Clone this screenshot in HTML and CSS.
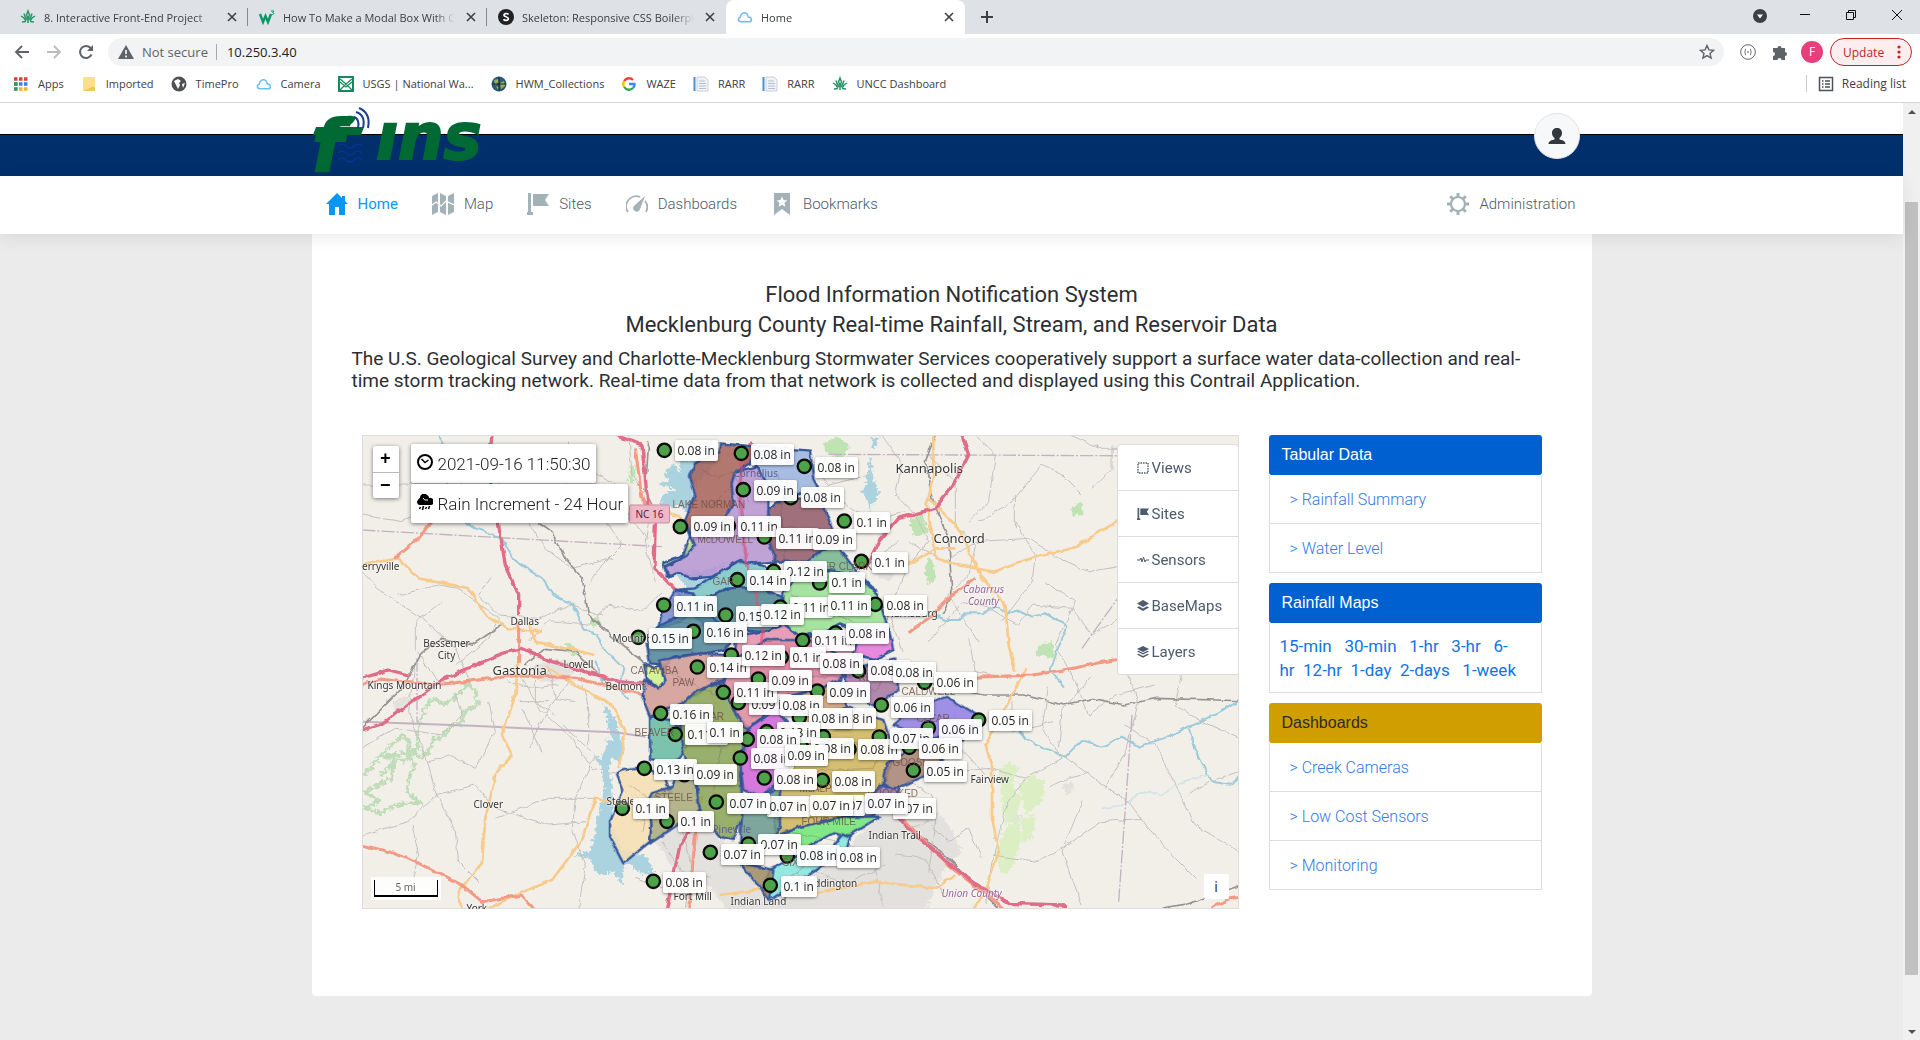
FILE: index.html
```html
<!DOCTYPE html>
<html lang="en">
<head>
<meta charset="utf-8">
<title>Home</title>
<link rel="stylesheet" href="styles.css">
</head>
<body>
<svg class="defs" aria-hidden="true">
  <symbol id="i-close" viewBox="0 0 16 16"><path d="M4 4l8 8M12 4l-8 8" stroke="currentColor" stroke-width="1.6" fill="none"/></symbol>
  <symbol id="i-cloud" viewBox="0 0 16 16"><path d="M4 12.8c-3.400-.2-3.400-4.300-.6-4.600 0-3.200 3-5.200 5.400-4.200 2 .7 2.300 2.600 2.600 4 4 .3 3.800 4.600.8 4.800z" fill="none" stroke="#6dbff2" stroke-width="1.500"/></symbol>
  <symbol id="i-leaf" viewBox="0 0 16 16"><g fill="none" stroke="#2b9468" stroke-width="1.500"><path d="M8 2l-1.500 4L8 9l1.500-3zM8 9v5M4 4.500l1 3 2 3M12 4.500l-1 3-2 3M1 7l3 2 2 3M15 7l-3 2-2 3M2 13l4-.5M14 13l-4-.5"/></g></symbol>
  <symbol id="i-doc" viewBox="0 0 16 16"><path d="M4 1h8l3 3v11H4z" fill="#eff3f7" stroke="#c8d1da"/><path d="M6 5h6M6 7.500h7M6 10h7M6 12.500h7" stroke="#b4c1ce"/><path d="M1.500 1v14" stroke="#4a8fd0" stroke-width="2"/></symbol>
  <symbol id="i-flag" viewBox="0 0 22 22"><path d="M1 0h3v19h2v3H0v-3h1zM6 1h16l-4 6 4 6H6z" fill="currentColor"/></symbol>
  <symbol id="i-layers" viewBox="0 0 12 12"><path d="M6 0l6 3-6 3-6-3zM0 5.500l1.500-.8L6 7l4.500-2.300 1.500.8-6 3zM0 8.500l1.500-.8L6 10l4.500-2.300 1.500.8-6 3.200z" fill="currentColor"/></symbol>
</svg>

<header class="browser">
  <div class="tabs">
    <div class="tab"><svg class="ic"><use href="#i-leaf"/></svg><span>8. Interactive Front-End Project</span><button aria-label="Close tab"><svg class="ic"><use href="#i-close"/></svg></button></div>
    <div class="tab"><svg class="ic" viewBox="0 0 16 16"><path d="M1 5l3 8 2.500-6L9 13l3-8" fill="none" stroke="#059862" stroke-width="2.400"/><path d="M12 2h3l-1.500 1.500c2 0 2 2.500-1 2" fill="none" stroke="#059862"/></svg><span>How To Make a Modal Box With CSS</span><button aria-label="Close tab"><svg class="ic"><use href="#i-close"/></svg></button></div>
    <div class="tab"><svg class="ic" viewBox="0 0 16 16"><circle cx="8" cy="8" r="8" fill="#222"/><path d="M10.500 5.500C9.500 4 5.700 4.200 6 6.300c.3 1.700 4.200 1.200 4.300 3.300.1 2.200-3.800 2.200-4.800.6" fill="none" stroke="#fff" stroke-width="1.700"/></svg><span>Skeleton: Responsive CSS Boilerplate</span><button aria-label="Close tab"><svg class="ic"><use href="#i-close"/></svg></button></div>
    <div class="tab active"><svg class="ic"><use href="#i-cloud"/></svg><span>Home</span><button aria-label="Close tab"><svg class="ic"><use href="#i-close"/></svg></button></div>
    <button class="newtab" aria-label="New tab"><svg class="ic" viewBox="0 0 16 16"><path d="M8 2v12M2 8h12" stroke="#3c4043" stroke-width="2"/></svg></button>
    <div class="winctl">
      <button aria-label="Search tabs"><svg class="ic" viewBox="0 0 16 16"><circle cx="9" cy="10" r="7" fill="#3c4043" transform="translate(0 -1)"/><path d="M6 7.500h6L9 11.500z" fill="#fff"/></svg></button>
      <button aria-label="Minimize"><svg class="ic" viewBox="0 0 16 16"><path d="M3 7.500h10" stroke="#111"/></svg></button>
      <button aria-label="Restore"><svg class="ic" viewBox="0 0 16 16"><path d="M3.500 5.500h7v7h-7zM5.500 5V3.500h7v7H11" fill="none" stroke="#111"/></svg></button>
      <button aria-label="Close window"><svg class="ic" viewBox="0 0 16 16"><path d="M3 3l10 10M13 3L3 13" stroke="#111"/></svg></button>
    </div>
  </div>
  <div class="toolbar">
    <button aria-label="Back"><svg class="ic" viewBox="0 0 16 16"><path d="M15 8H2M8 2L2 8l6 6" fill="none" stroke="#5f6368" stroke-width="1.800"/></svg></button>
    <button aria-label="Forward"><svg class="ic" viewBox="0 0 16 16"><path d="M1 8h13M8 2l6 6-6 6" fill="none" stroke="#babcbe" stroke-width="1.800"/></svg></button>
    <button aria-label="Reload"><svg class="ic" viewBox="0 0 16 16"><path d="M13.500 10.500A6 6 0 1 1 12.500 4L14 6" fill="none" stroke="#5f6368" stroke-width="2"/><path d="M15 1v6H9z" fill="#5f6368"/></svg></button>
    <div class="omnibox">
      <svg class="ic" viewBox="0 0 16 16"><path d="M8 1l8 14H0z" fill="#5f6368"/><path d="M8 6v4M8 11.500v2" stroke="#fff" stroke-width="1.600"/></svg>
      <span class="insecure">Not secure</span>
      <input aria-label="Address" value="10.250.3.40">
      <svg class="ic" viewBox="0 0 16 16"><path d="M8 1.500l1.900 4.400 4.700.4-3.600 3.100 1.100 4.700L8 11.600l-4.100 2.500L5 9.400 1.400 6.300l4.700-.4z" fill="none" stroke="#5f6368" stroke-width="1.400"/></svg>
    </div>
    <div class="ext">
      <svg class="ic" viewBox="0 0 16 16"><circle cx="8" cy="8" r="7.300" fill="none" stroke="#5f6368"/><path d="M6 5C4.500 5 6 7.500 4.500 8 6 8.500 4.500 11 6 11M10 5c1.500 0 0 2.500 1.500 3-1.500.5 0 3-1.500 3M7 8h2" fill="none" stroke="#5f6368"/></svg>
      <svg class="ic" viewBox="0 0 16 16"><path d="M1 4h4.500a2 2 0 1 1 4 0H13v4a2 2 0 1 1 0 4v4H9.500a2 2 0 1 0-4 0H1v-4a2 2 0 1 0 0-4z" fill="#5f6368"/></svg>
      <span class="profile">F</span>
      <button class="update">Update<svg viewBox="0 0 4 16"><g fill="#c5221f"><circle cx="2" cy="3" r="1.600"/><circle cx="2" cy="8" r="1.600"/><circle cx="2" cy="13" r="1.600"/></g></svg></button>
    </div>
  </div>
  <nav class="bookmarks" aria-label="Bookmarks">
    <a href="#"><svg class="ic" viewBox="0 0 16 16"><g stroke-width="3.500" stroke-dasharray="3.500 1.500"><path d="M1 3h14" stroke="#d8433a"/><path d="M1 8h14" stroke="#3f7de0"/><path d="M1 8h4" stroke="#2f9e52"/><path d="M1 13h14" stroke="#f0b429"/><path d="M1 13h4" stroke="#2f9e52"/></g></svg>Apps</a>
    <a href="#"><svg class="ic" viewBox="0 0 16 16"><path d="M2 1h12v14H2z" fill="#fbe08a"/><path d="M11 11h3v4H2" fill="#eec65a"/></svg>Imported</a>
    <a href="#"><svg class="ic" viewBox="0 0 16 16"><circle cx="8" cy="8" r="7.500" fill="#4d5156"/><path d="M3 5l4-2 3 2-2 2 1 2-2 4-2-4zM11 8l3-1-2 5z" fill="#fff"/></svg>TimePro</a>
    <a href="#"><svg class="ic"><use href="#i-cloud"/></svg>Camera</a>
    <a href="#"><svg class="ic" viewBox="0 0 16 16"><path d="M1 1h14v14H1z" fill="#fff" stroke="#138a5b" stroke-width="2"/><path d="M2 3l6 5 6-5M2 6l6 5 6-5M2 14l6-6 6 6" fill="none" stroke="#138a5b" stroke-width="1.200"/></svg>USGS | National Wa...</a>
    <a href="#"><svg class="ic" viewBox="0 0 16 16"><circle cx="8" cy="8" r="7.500" fill="#2b5a80"/><path d="M3 4l4-1 1 3-4 3zM9 7l4-2 1 5-4 3zM5 10l3 1-1 3z" fill="#9bb04a"/><path d="M1 8h14M8 1v14" stroke="#222"/></svg>HWM_Collections</a>
    <a href="#"><svg class="ic" viewBox="0 0 16 16"><g fill="none" stroke-width="2.400"><path d="M3.200 5A5.500 5.500 0 0 1 12 4" stroke="#ea4335"/><path d="M3.200 11a5.500 5.500 0 0 1 0-6" stroke="#fbbc05"/><path d="M12 12a5.500 5.500 0 0 1-8.800-1" stroke="#34a853"/><path d="M8 8h5.500a5.500 5.500 0 0 1-1.500 4" stroke="#4285f4"/></g></svg>WAZE</a>
    <a href="#"><svg class="ic"><use href="#i-doc"/></svg>RARR</a>
    <a href="#"><svg class="ic"><use href="#i-doc"/></svg>RARR</a>
    <a href="#"><svg class="ic"><use href="#i-leaf"/></svg>UNCC Dashboard</a>
    <a href="#" class="reading"><svg class="ic" viewBox="0 0 16 16"><path d="M1.500 1.500h13v13h-13zM4 5h1.500M7 5h5M4 8h1.500M7 8h5M4 11h1.500M7 11h5" fill="none" stroke="#4d5156" stroke-width="1.500"/></svg>Reading list</a>
  </nav>
</header>

<div class="viewport">
  <div class="site">
    <div class="banner">
      <div class="wrap">
        <a class="logo" href="#" aria-label="fins"><svg viewBox="0 0 180 73" aria-hidden="true">
          <text class="logo-f" x="0" y="68">f</text><text class="logo-ins" x="64" y="56">ıns</text>
          <path d="M1 32l3-8h48l-3 8zM26 20c2-6 8-9 18-6-2 6-5 7-8 9-2-3-5-2-8-1z" fill="#006934"/>
          <g fill="none" stroke="#1c3f94" stroke-width="2"><path d="M42 14q6 2 4 11M44 9q10 3 7 16M47 5q12 5 9 20"/></g>
          <path d="M26 43q4-4 8 0t8 0 8 0M26 50q4-4 8 0t8 0 8 0M26 57q4-4 8 0t8 0 8 0" fill="none" stroke="#0a3190" stroke-width="1.500"/>
        </svg></a>
        <button class="user" aria-label="Account"><svg viewBox="0 0 18 18"><path d="M9 1c3 0 5 2 5 5 0 2-1 4-2.500 5v1.500c2.500.5 6 1.500 6 4.500H.5c0-3 3.500-4 6-4.500V11C5 10 4 8 4 6c0-3 2-5 5-5z" fill="#33383f"/></svg></button>
      </div>
    </div>
    <nav class="mainnav" aria-label="Main">
      <div class="wrap">
        <a href="#" class="on"><svg viewBox="0 0 22 22"><path d="M11 0L0 11h3v11h6v-8h4v8h6V11h3l-3-3V3h-3v2z" fill="currentColor"/></svg>Home</a>
        <a href="#"><svg viewBox="0 0 22 22"><path d="M0 3l6-3v19l-6 3zM8 0l6 3v19l-6-3zM16 3l6-3v19l-6 3z" fill="currentColor"/><path d="M0 12l4-3 5 4 5-5 8 4" fill="none" stroke="#fff" stroke-width="1.200"/></svg>Map</a>
        <a href="#"><svg viewBox="0 0 22 22"><use href="#i-flag"/></svg>Sites</a>
        <a href="#"><svg viewBox="0 0 22 22"><path d="M2 19a10 10 0 0 1 12-15M19 8a10 10 0 0 1 1 11" fill="none" stroke="currentColor" stroke-width="1.800"/><path d="M19 3l-5 13a3.500 3.500 0 1 1-5-4z" fill="currentColor"/></svg>Dashboards</a>
        <a href="#"><svg viewBox="0 0 22 22"><path d="M3 0h16v22l-8-6-8 6z" fill="currentColor"/><path d="M11 3.500l1.600 3.500 3.700.4-2.800 2.500.8 3.800-3.300-2-3.300 2 .8-3.800L5.700 7.400 9.400 7z" fill="#fff"/></svg>Bookmarks</a>
        <a href="#" class="admin"><svg viewBox="0 0 22 22"><circle cx="11" cy="11" r="7" fill="none" stroke="currentColor" stroke-width="2.200"/><path d="M11 0v4M11 18v4M0 11h4M18 11h4M3.200 3.200L6 6M16 16l2.800 2.800M3.200 18.800L6 16M16 6l2.800-2.800" stroke="currentColor" stroke-width="3"/></svg>Administration</a>
      </div>
    </nav>
    <main class="card">
      <h1>Flood Information Notification System<br>Mecklenburg County Real-time Rainfall, Stream, and Reservoir Data</h1>
      <p class="intro">The U.S. Geological Survey and Charlotte-Mecklenburg Stormwater Services cooperatively support a surface water data-collection and real-time storm tracking network. Real-time data from that network is collected and displayed using this Contrail Application.</p>
      <div class="cols">
        <section class="map" aria-label="Rainfall map">
          <svg class="base" viewBox="0 0 2631 1422" preserveAspectRatio="xMinYMin slice" aria-hidden="true">
            <defs>
              <filter id="shore" x="-5%" y="-5%" width="110%" height="110%"><feTurbulence type="fractalNoise" baseFrequency=".09" numOctaves="2" seed="4"/><feDisplacementMap in="SourceGraphic" scale="26" xChannelSelector="R" yChannelSelector="G"/></filter>
              <filter id="bend" x="-5%" y="-5%" width="110%" height="110%"><feTurbulence type="fractalNoise" baseFrequency=".035" numOctaves="2" seed="9"/><feDisplacementMap in="SourceGraphic" scale="14" xChannelSelector="R" yChannelSelector="G"/></filter>
            </defs>
            <path d="M0 0h2631v1422H0z" fill="#f2efe9"/>
            <g fill="#e3e1dd" filter="url(#shore)">
              <path d="M880 1220l130-90 220 270 140-90 210-190 90 60 80 110-60 140H1100l-60-80-90-30z"/>
              <path d="M1630 1150l70-40 60 60 40 80-60 60-80-30zM90 800l50-20 10 20-45 30zM520 690l60-20 70 20-30 40-80 10zM1560 380l50 20-30 40-40-20zM1950 1130l30 10-10 30-30-10zM2100 1050l30-10 10 20-30 20z"/>
            </g>
            <g fill="#aad3df" filter="url(#shore)">
              <path d="M905 120l30-35 22 30-6-70 25 35 30-60 60 20-15 60-60 60 10 50-40-20-30 15 10-40-50-20 30-10z"/>
              <path d="M900 175l50-10 45 35-20 30-30-20-50 20zM935 400l50 12 60-10 50-25-60 70-60 20zM715 1120l12-60-8-60-20-40 20 10 20-50 20 20-20 70 16 70-8 90 42 80 60 10 30 50-30 10-60-40-10 70-24-40-50 10-20-50-60-10 60-10z"/>
              <path d="M722 810l20 10 24 50 20 80-10 30-24-10-20-60 20 10-10-40zM1500 170l15-30 10-80 10 80 18 30-20 40-10 20-10-40zM1530 10l20-8-6 30-16 10z"/>
            </g>
            <g fill="none" stroke="#9ccbdc" stroke-width="6" stroke-linejoin="round" filter="url(#bend)">
              <path d="M230 0l20 30-10 60 40 150 60 40 80 30 30 60 90 60 34 50 60 30 30 70 40 20 20 40 60 60-14 60 30 30M1720 540l30 15 40 0 20-20 50 0 40-20 40 20 30-10 40 20 40-10 66 40-30 70-20 60 40 50M2480 880l30 90 40 70 60 10 30-40M1950 860l40 50 60 30 60 25 50-50 60 20 60-30 50 30 90-30 60-30 90-40 80-50M720 740l-20-60"/>
              <path d="M2220 1120l60-10 60-40 60 10 60-40 80-20" stroke="#cfe4e8" stroke-width="5"/>
            </g>
            <g fill="#dcefc4" filter="url(#shore)">
              <path d="M1910 1010l30-30 30 20-20 50 30 40-20 60-30 20-10-60zM1970 1050l40-30 40 20-10 60-50 40zM1930 1180l40-30 10 60-30 90-30 20-20-60zM1980 1150l40-10-10 70-30 20z"/>
            </g>
            <g fill="#bfe3b2" filter="url(#shore)">
              <path d="M2030 630l40-10 10 50-60-10zM1640 250l40-10 20 50-40 20zM1700 370l14 10 8 50-20 20-14-40zM1385 25l45-20 36 30-30 36-50-20zM2125 217l32-12 10 30-36 10z"/>
              <path d="M800 100l22-10-6 60-16-10zM690 545l30 10-14 20-26-10zM610 620l20 10 20 30-26 0z"/>
            </g>
            <g transform="translate(-6 675)" fill="none" stroke="#a5d3a0" stroke-width="10" stroke-opacity=".65" stroke-linejoin="round" filter="url(#shore)">
              <path d="M8 350l60-70 60-55 20 20-5 30 30-10 0-60 20-60 30-30 30 20 50-40 20-25 20 15 10 50-40 20-10 40-20-10-40 50-20 0-20 40-20 20-20-20-30 30-20-10-50 50M60 290l80-10 25 30-20 50 0 40 40 30-50 0-40 10-30 20-50-15 40-20-40-30 80-40 5-60z"/>
            </g>
            <!-- minor roads -->
            <g fill="none" stroke="#c3c1be" stroke-width="3" stroke-linejoin="round" filter="url(#bend)">
              <path d="M0 240l120 20 140-60 60-90 120-60M0 410l60 60 120 80 100 90 40 90M110 480l120-30 60 10 120 90-30 60-100 80M240 500l-80 60 0 80 60 90 60 20M450 180l60 100 40 60 80 60 120-30M390 420l-40 60 60 60 120 10 90-40 100 30M500 620l60-60 120 10 60-60 100 20 60-60M620 20l-20 100 40 90 80 30 60 90-60 60-40 60M420 120l-20 60 60 60M0 150l140 0 80-110M680 100l100 60 20 90 60 60M800 0l10 120 60 90-20 130 30 100"/>
              <path d="M380 800l20 90-60 110-80-40-60 20M480 730l60 100 90 80 60 90 100 20M620 740l-60 80-60 120M480 820l60 130M160 680l-20 150 60 160 20 80 60 120 10 90 60 60M0 1200l140-40 80-80 120-30 60 70 160 50 110-10M400 1150l160-60 140 0M650 700l30 120 0 110M150 1170l20 90-20 80M600 870l100 90-60 130-10 100 40 100-20 130M0 940l100-60 140 20 60-60-20-60"/>
              <path d="M1560 0l60 90-20 90 60 60 40 80-60 70-60 140 40 120M1700 60l80 80 0 130 60 60-20 90-60 60 90 140M1840 0l60 60-20 140-60 60M1640 320l110 60 90-60 160-10 90 60 90 40 120-20M1850 260l100-60 90-110 60 30 60 60M1960 260l60 100-10 80-90 120M1960 180l0 100M2120 0l100 40 160 0M1700 620l100-120 60 10 110 60 40-60 120 10 60 80 80-50M2190 160l60-60 0-70M1820 610l20 100 110 20M2050 440l90 60-60 130 60 110 40 100 80-60 120-30"/>
              <path d="M1700 950l90 60 90-10 110 30 110-60-60-90 20-130M2100 960l110 80 90 60 60 80 80 90 60 60M1990 1030l-60 90-40 160-20 130M2060 1060l60-30 60-15M2160 1100l-60 150 60 160M1890 1260l140 20 100-60 90-60 120-10M2290 870l90 60 60 120 60 120 130 80M2480 1080l60-40 90-30M2270 660l60 140-40 150-60 110M1780 830l0 90 90 100M2190 720l-90 110-10 110M2070 860l-120 30 0-90M2420 650l40 60-20 100 60 40 130 60M1640 1180l60-20 60 60 60-40 40 90M1650 1040l60 40 10 100-20 130M1600 1260l90 10 60 120"/>
              <path d="M520 690l0 110 60 40M560 690l20 100 60 10M440 740l60 20 90-10M470 800l90 0M1340 60l60 90 120-30M1440 200l90 60 100-30M1500 400l110-80M1420 1180l120 120 20 110M1340 1300l110 50 120-60M900 1220l60 90 90 20M820 1330l110 40 100-10M960 1180l30 110-20 130"/>
            </g>
            <g fill="none" stroke="#c4b2c2" stroke-width="4">
              <path d="M0 860l330 12 420 20M750 890l100 15" stroke-width="6"/>
              <path d="M0 285l900 50M1400 58l1200 6M2160 640l400-560M165 670l0 190M2310 840l-40 560" stroke-dasharray="40 6 6 6"/>
            </g>
            <!-- railways -->
            <g fill="none" stroke="#969492" stroke-width="5" filter="url(#bend)">
              <path d="M500 240l70 50 40 80 50 60 20 110 100 90 80 60M0 880l120-120 60-110 60-40 90 20 90-60M490 690l60-50 90 10 60 60 50 50M1720 0l-30 80 20 110 50 120 10 170-30 60M1764 760l100 20 120 0 120 30 90-20 90 20 100-20 350 10M860 20l-10 150 30 60M1590 1130l180 150 140 140M2400 1422l60-10 90-30 81-30"/>
            </g>
            <!-- secondary roads -->
            <g fill="none" stroke="#f8cb8c" stroke-width="8" stroke-linejoin="round" filter="url(#bend)">
              <path d="M0 390l110-20 60 60 150 30 60 90 60 30 100 10M470 560l0 100-10 120-40 120 30 60-50 60-30 130-10 130-70 90 20 120M800 220l-60-20-80-10M700 660l-180-40-20-60M550 690l90 60 110 60 40 80-20 110M780 1110l-80-20M700 1085l-40 130-90 120-100 40-80 40-40 30M1714 0l0 120-20 90 30 160 60 20 110 20 60-20 80-30 100-20 130-80 60-60 80-10M1700 190l90 90 40 90 30 60 70 80 10 120 20 80M1614 400l110-60 60 0M840 200l80 30 60 30M1990 700l-60 120-60 110 20 60 0 160 20 100-40 120-90 130M1070 1380l160-20 110 20 200-40 180 20 60-40"/>
              <path d="M1014 700l100 220 40 220M1200 640l60 240-20 240M1290 520l100 140 200 110" stroke-width="6"/>
            </g>
            <!-- primary roads -->
            <g fill="none" stroke="#f49a84" stroke-width="9" stroke-linejoin="round" filter="url(#bend)">
              <path d="M0 750l60-20 160 20 260-30 160 10 210 50M100 370l70-60 60-80M470 560l0 120M0 1230l80 20 80 30 140 70 60 50 120-20 60 70M980 1422l20-220 20-120M1614 735l400-15 120-20 120-25 60-5 120-30 50-5M1590 1120l180 180 160 122M2540 1422l60-30 31-5M1840 430l-80 60-60 60-60 40M820 40l20 150 20 40"/>
            </g>
            <!-- motorways -->
            <g fill="none" stroke="#e06c88" stroke-width="10" stroke-linejoin="round" filter="url(#bend)">
              <path d="M390 0l-10 90 30 180 20 120 40 90 0 60M0 730l80-25 60 15M0 885l60-20 180-130 180-80 60-15 90 40 200 60 120 10M760 0l80 30 20 200 20 30-4 140 80 80M1170 20l-40 130 20 230M1014 1140l-60 90-40 190M1800 0l20 60-40 80-60 80-110 30-60 70-40 80M1590 1130l80 80 160 130 110 65 160 5 20 20"/>
            </g>
            <!-- watershed basins -->
            <g stroke="#34549c" stroke-width="7" stroke-linejoin="round" fill-opacity=".86" filter="url(#bend)">
              <g transform="translate(834 -15)">
                <path d="M240 40l80 7 25 3-15 50-45 25-10 35 5 60-35 60-95 30-15-40 30-75-15-55 15-40 70-33z" fill="#a8625a"/>
                <path d="M345 47l165 15 10 88 35 65-75-25-40-10-55-5-25-45-15-30z" fill="#9bb3e0"/>
                <path d="M150 310l95-30 35-60-5-60 10-35 65-15 35 60v130l20 95-65 5-50-5-70 45-60 5-50-15-30 10-10-40 65-30 25-30z" fill="#b795d3"/>
                <path d="M135 280l30 65-30 35-60 30 10 30-15-40 60-25 20-55z" fill="#cdea90"/>
                <path d="M385 240l55-40 105 15 30 75 15 45-50 35-40 25h-95l-20-65z" fill="#935b6a"/>
                <path d="M505 395l25-25 60-25 60 80 55 55-65-30-80-10z" fill="#74b68e"/>
                <path d="M105 480l60-5 135-85 80 20 30 30-60 30-90 5-120 55z" fill="#7ec6c8"/>
                <path d="M130 530l140-55 80-5 75 30 10 80-50 20-100 5-90-20z" fill="#4d8793"/>
                <path d="M430 490l75-95 55 25 90 10 60 60 30 90-90 20-50-20-40 20-80 20-50-40z" fill="#9ae094"/>
                <path d="M105 480l55 10 20 40-60 45-65 20 10-50z" fill="#7c8cd4"/>
                <path d="M20 640l35-50 75-40 70-5 60 60 25 15-35 40-60 10-90 10-20 25-50-5z" fill="#50869a"/>
                <path d="M285 620l100-20 45-20 50 40 110-10 60 40-10 90H280z" fill="#e491ae"/>
                <path d="M650 640l95-50 15 70-60 30-60-15z" fill="#e678dc"/>
              </g>
              <g transform="translate(714 615)">
                <path d="M132 70l30 15 20-10 15 45-22 27-35-32z" fill="#d0f48c"/>
                <path d="M180 60l60-10 60-10 80 5 20 65-60 20-95 60-95 40-20-50 5-60 40 25 22-25z" fill="#d39c96"/>
                <path d="M150 230l60 10 60 40-20 60-30 30-70-10z" fill="#69bca4"/>
                <path d="M250 190l40-40 85-25 25 85 50 60-30 130 10 120-30 80-40-10-60-80-10-80-40-90-10-60z" fill="#8aa457"/>
                <path d="M400 60l100-60h140l100 60-20 70-160 40-60 50-60 50-40-60-30-80z" fill="#de8aa2"/>
                <path d="M440 270l90-60 70 80-80 150-40 30-50-20-10-80z" fill="#d266da"/>
                <path d="M560 180l160-60 20 80-100 60-50-10z" fill="#d6a27a"/>
                <path d="M735 90l150-35 10 95-65 50-90-40z" fill="#a678a4"/>
                <path d="M640 260l100-60 110 40 20 60 10 50-30 90-110 90-140 30-80 30 20-140 50-120z" fill="#cfb65e"/>
                <path d="M430 470l50 0 60-30 0 120-40 60-50 20-30-30z" fill="#6a9a90"/>
                <path d="M880 255l70-55 90-30 110 65-50 55-100 10-60-20z" fill="#9380e4"/>
                <path d="M860 370l90-60 60-20 80 10-120 110-90 40-30-20z" fill="#a98474"/>
                <path d="M840 440l60 5-20 45-70 40-60 0z" fill="#9472b0"/>
                <path d="M50 400l20-10 65-5 60 30 15 40-60 20 5 60-5 70-80 65-40-75v-50l40-95z" fill="#f7dfb2"/>
                <path d="M155 460l60-20 20-50 50 30 15 90-150 100 5-60-15-60z" fill="#abab7e"/>
                <path d="M510 600l90-40 140-30h100l-100 60-40-10-80 40-50-5z" fill="#70e674"/>
                <path d="M510 690l90-50 100-20 30-40 20 10-10 40-90 60-140 90-20-40z" fill="#86e6de"/>
                <path d="M420 670l60 10 40 10-10 90z" fill="#a08c62"/>
              </g>
            </g>
            <g fill="none" stroke="#6b4a50" stroke-opacity=".28" stroke-width="3" filter="url(#bend)">
              <path d="M1010 100l60 30 40-20 50 90M1100 160l-60 60M1250 120l20 300M1150 300l90-30 130 20M940 560l140 20 120-40M1290 480l200 90M900 700l180 90 160-60M1000 850l80 90-30 150M1330 900l190 30 60-60M1310 1010l220-10 40-60M800 1050l60 40-20 100M1240 760l60 60 100-40M1440 690l100 80 40-60M1660 830l140 30M1240 1180l180 40M1280 1330l80-60"/>
            </g>
            <path d="M1140 60l-6 100 20 220 50 180-10 110" fill="none" stroke="#d8527a" stroke-opacity=".6" stroke-width="9" filter="url(#bend)"/>
            <!-- rain gauges -->
            <g fill="#4ea24a" stroke="#0b0b0b" stroke-width="7">
              <g transform="translate(834 -15)"><circle cx="73" cy="61" r="20"/><circle cx="304" cy="70" r="20"/><circle cx="493" cy="109" r="20"/><circle cx="310" cy="179" r="20"/><circle cx="452" cy="203" r="20"/><circle cx="121" cy="290" r="20"/><circle cx="265" cy="288" r="20"/><circle cx="373" cy="321" r="20"/><circle cx="613" cy="273" r="20"/><circle cx="664" cy="394" r="20"/><circle cx="401" cy="424" r="20"/><circle cx="292" cy="449" r="20"/><circle cx="539" cy="459" r="20"/><circle cx="71" cy="525" r="20"/><circle cx="257" cy="555" r="20"/><circle cx="421" cy="531" r="20"/><circle cx="706" cy="523" r="20"/><circle cx="160" cy="604" r="20"/><circle cx="587" cy="609" r="20"/><circle cx="488" cy="631" r="20"/><circle cx="-5" cy="622" r="20"/></g>
              <g transform="translate(714 615)"><circle cx="394" cy="45" r="20"/><circle cx="292" cy="81" r="20"/><circle cx="544" cy="52" r="20"/><circle cx="475" cy="117" r="20"/><circle cx="370" cy="157" r="20"/><circle cx="415" cy="188" r="20"/><circle cx="652" cy="153" r="20"/><circle cx="776" cy="93" r="20"/><circle cx="974" cy="127" r="20"/><circle cx="844" cy="195" r="20"/><circle cx="182" cy="220" r="20"/><circle cx="226" cy="283" r="20"/><circle cx="598" cy="232" r="20"/><circle cx="442" cy="298" r="20"/><circle cx="500" cy="275" r="20"/><circle cx="670" cy="290" r="20"/><circle cx="838" cy="291" r="20"/><circle cx="985" cy="264" r="20"/><circle cx="1136" cy="240" r="20"/><circle cx="421" cy="354" r="20"/><circle cx="605" cy="322" r="20"/><circle cx="493" cy="414" r="20"/><circle cx="667" cy="421" r="20"/><circle cx="928" cy="322" r="20"/><circle cx="940" cy="391" r="20"/><circle cx="747" cy="328" r="20"/><circle cx="133" cy="385" r="20"/><circle cx="253" cy="404" r="20"/><circle cx="67" cy="505" r="20"/><circle cx="201" cy="544" r="20"/><circle cx="349" cy="486" r="20"/><circle cx="331" cy="637" r="20"/><circle cx="445" cy="612" r="20"/><circle cx="562" cy="648" r="20"/><circle cx="511" cy="736" r="20"/><circle cx="160" cy="724" r="20"/></g>
            </g>
          </svg>

          <div class="places">
            <span style="left:-12px;top:131px">Cherryville</span>
            <span class="two" style="left:85px;top:214px">Bessemer<br>City</span>
            <span style="left:149px;top:186px">Dallas</span>
            <span class="big" style="left:131px;top:235px">Gastonia</span>
            <span style="left:202px;top:229px">Lowell</span>
            <span style="left:251px;top:203px">Mount Holly</span>
            <span style="left:6px;top:250px">Kings Mountain</span>
            <span style="left:244px;top:251px">Belmont</span>
            <span style="left:112px;top:369px">Clover</span>
            <span style="left:245px;top:366px">Steele</span>
            <span style="left:105px;top:473px">York</span>
            <span class="big" style="left:534px;top:33px">Kannapolis</span>
            <span class="big" style="left:572px;top:103px">Concord</span>
            <span style="left:525px;top:178px">Harrisburg</span>
            <span style="left:507px;top:400px">Indian Trail</span>
            <span style="left:438px;top:448px">Weddington</span>
            <span style="left:312px;top:461px">Fort Mill</span>
            <span style="left:369px;top:466px">Indian Land</span>
            <span style="left:609px;top:344px">Fairview</span>
            <span class="faded" style="left:372px;top:38px">Cornelius</span>
            <span class="faded" style="left:351px;top:394px">Pineville</span>
            <span class="county two" style="left:622px;top:160px">Cabarrus<br>County</span>
            <span class="county" style="left:580px;top:458px">Union County</span>
            <span class="basin" style="left:311px;top:70px">LAKE NORMAN</span>
            <span class="basin" style="left:336px;top:105px">McDOWELL</span>
            <span class="basin" style="left:351px;top:147px">GAR</span>
            <span class="basin" style="left:440px;top:132px">UPPER CLARKE</span>
            <span class="basin" style="left:269px;top:236px">CATAWBA</span>
            <span class="basin" style="left:311px;top:248px">PAW</span>
            <span class="basin" style="left:273px;top:298px">BEAVER</span>
            <span class="basin" style="left:327px;top:282px">SUGAR</span>
            <span class="basin" style="left:293px;top:363px">STEELE</span>
            <span class="basin" style="left:438px;top:354px">McALPINE</span>
            <span class="basin" style="left:440px;top:387px">FOUR MILE</span>
            <span class="basin" style="left:421px;top:428px">SIX MILE</span>
            <span class="basin" style="left:540px;top:257px">CALDWELL</span>
            <span class="basin" style="left:555px;top:284px">CLEAR</span>
            <span class="basin" style="left:497px;top:243px">REEDY</span>
            <span class="basin" style="left:531px;top:328px">GOOSE</span>
            <span class="basin" style="left:506px;top:359px">CROOKED</span>
            <span class="shield" style="left:267px;top:79px">NC 16</span>
          </div>

          <div class="tips">
            <span style="left:313px;top:5px">0.08 in</span><span style="left:389px;top:9px">0.08 in</span><span style="left:453px;top:22px">0.08 in</span>
            <span style="left:439px;top:52px">0.08 in</span><span style="left:392px;top:45px">0.09 in</span><span style="left:329px;top:81px">0.09 in</span>
            <span style="left:376px;top:81px">0.11 in</span><span style="left:492px;top:77px">0.1 in</span><span style="left:414px;top:93px">0.11 in</span>
            <span style="left:451px;top:94px">0.09 in</span><span style="left:510px;top:117px">0.1 in</span><span style="left:422px;top:126px">0.12 in</span>
            <span style="left:385px;top:135px">0.14 in</span><span style="left:467px;top:137px">0.1 in</span><span style="left:312px;top:161px">0.11 in</span>
            <span style="left:428px;top:162px">0.11 in</span><span style="left:466px;top:160px">0.11 in</span><span style="left:522px;top:160px">0.08 in</span>
            <span style="left:374px;top:171px">0.15 in</span><span style="left:399px;top:169px">0.12 in</span><span style="left:342px;top:187px">0.16 in</span>
            <span style="left:450px;top:195px">0.11 in</span><span style="left:484px;top:188px">0.08 in</span><span style="left:287px;top:193px">0.15 in</span>
            <span style="left:345px;top:222px">0.14 in</span><span style="left:380px;top:210px">0.12 in</span><span style="left:428px;top:212px">0.1 in</span>
            <span style="left:458px;top:218px">0.08 in</span><span style="left:506px;top:225px">0.08 in</span><span style="left:531px;top:227px">0.08 in</span>
            <span style="left:572px;top:237px">0.06 in</span><span style="left:387px;top:259px">0.09 in</span><span style="left:372px;top:247px">0.11 in</span>
            <span style="left:407px;top:235px">0.09 in</span><span style="left:465px;top:247px">0.09 in</span><span style="left:418px;top:260px">0.08 in</span>
            <span style="left:471px;top:273px">0.08 in</span><span style="left:447px;top:273px">0.08 in</span><span style="left:529px;top:262px">0.06 in</span>
            <span style="left:308px;top:269px">0.16 in</span><span style="left:627px;top:275px">0.05 in</span><span style="left:323px;top:289px">0.11 in</span>
            <span style="left:345px;top:287px">0.1 in</span><span style="left:415px;top:287px">0.13 in</span><span style="left:395px;top:294px">0.08 in</span>
            <span style="left:449px;top:303px">0.08 in</span><span style="left:389px;top:313px">0.08 in</span><span style="left:423px;top:310px">0.09 in</span>
            <span style="left:496px;top:304px">0.08 in</span><span style="left:528px;top:293px">0.07 in</span><span style="left:577px;top:284px">0.06 in</span>
            <span style="left:557px;top:303px">0.06 in</span><span style="left:292px;top:324px">0.13 in</span><span style="left:332px;top:329px">0.09 in</span>
            <span style="left:412px;top:334px">0.08 in</span><span style="left:470px;top:336px">0.08 in</span><span style="left:562px;top:326px">0.05 in</span>
            <span style="left:405px;top:361px">0.07 in</span><span style="left:365px;top:358px">0.07 in</span><span style="left:474px;top:360px">0.07</span>
            <span style="left:448px;top:360px">0.07 in</span><span style="left:531px;top:363px">0.07 in</span><span style="left:503px;top:358px">0.07 in</span>
            <span style="left:271px;top:363px">0.1 in</span><span style="left:316px;top:376px">0.1 in</span><span style="left:396px;top:399px">0.07 in</span>
            <span style="left:359px;top:409px">0.07 in</span><span style="left:435px;top:410px">0.08 in</span><span style="left:475px;top:412px">0.08 in</span>
            <span style="left:419px;top:441px">0.1 in</span><span style="left:301px;top:437px">0.08 in</span>
          </div>

          <div class="controls">
            <div class="zoom"><button aria-label="Zoom in">+</button><button aria-label="Zoom out">−</button></div>
            <div class="info">
              <div><svg viewBox="0 0 16 16"><circle cx="8" cy="8" r="7" fill="none" stroke="#000" stroke-width="2"/><path d="M4.500 5L8 8.500 11.500 6" fill="none" stroke="#000" stroke-width="1.500"/></svg>2021-09-16 11:50:30</div>
              <div><svg viewBox="0 0 16 16"><path d="M2 11a3 3 0 0 1-1-5 3 3 0 0 1 2-2 4 4 0 0 1 7-3 3 3 0 0 1 2 3 3.600 3.600 0 0 1 2 7z"/><path d="M6 4q1 3 5 2" stroke="#fff" fill="none"/><path d="M3.500 13l-1 2M6.500 12l-1 4M9.500 13l-1 2M12.500 12l-1 3" stroke="#000" stroke-width="1.500"/></svg>Rain Increment - 24 Hour</div>
            </div>
            <div class="panel">
              <button><svg viewBox="0 0 12 12"><path d="M1 1h10v10H1z" fill="none" stroke="currentColor" stroke-width="1.400" stroke-dasharray="1.500 1"/></svg>Views</button>
              <button><svg viewBox="0 0 22 22"><use href="#i-flag"/></svg>Sites</button>
              <button><svg viewBox="0 0 12 12"><path d="M0 6h3l1-2 1 4 1.500-5L8 8l1-2h3" fill="none" stroke="currentColor"/></svg>Sensors</button>
              <button><svg viewBox="0 0 12 12"><path d="M6 0l6 3.500L6 7 0 3.500zM0 7.500l2-1.200L6 8.500l4-2.200 2 1.200-6 3.500z" fill="currentColor"/></svg>BaseMaps</button>
              <button><svg viewBox="0 0 12 12"><use href="#i-layers"/></svg>Layers</button>
            </div>
          </div>
          <div class="scale"><span>5 mi</span></div>
          <button class="attrib" aria-label="Attribution">i</button>
        </section>

        <aside class="side">
          <section><h2>Tabular Data</h2>
            <ul><li><a href="#">&gt; Rainfall Summary</a></li><li><a href="#">&gt; Water Level</a></li></ul></section>
          <section><h2>Rainfall Maps</h2>
            <p class="ranges"><a href="#">15-min</a> &nbsp; <a href="#">30-min</a> &nbsp; <a href="#">1-hr</a> &nbsp; <a href="#">3-hr</a> &nbsp; <a href="#">6-hr</a> &nbsp;<a href="#">12-hr</a> &nbsp;<a href="#">1-day</a> &nbsp;<a href="#">2-days</a> &nbsp; <a href="#">1-week</a></p></section>
          <section><h2 class="gold">Dashboards</h2>
            <ul><li><a href="#">&gt; Creek Cameras</a></li><li><a href="#">&gt; Low Cost Sensors</a></li><li><a href="#">&gt; Monitoring</a></li></ul></section>
        </aside>
      </div>
    </main>
  </div>
  <div class="scrollbar" aria-hidden="true"><i class="up"></i><i class="thumb"></i><i class="down"></i></div>
</div>
</body>
</html>
```
FILE: styles.css
```css
* { box-sizing: border-box; }
body {
  margin: 0;
  min-height: 100vh;
  display: flex;
  flex-direction: column;
  background: #ebebeb;
  font-family: Roboto, "Liberation Sans", sans-serif;
  color: #2b2f33;
}
button { border: 0; padding: 0; background: none; font: inherit; color: inherit; }
a { text-decoration: none; color: inherit; }
.defs { position: absolute; width: 0; height: 0; }
.ic { width: 16px; height: 16px; flex: none; display: block; }

/* browser frame */
.browser { background: #fff; border-bottom: 1px solid #d5d7da; font-family: "Open Sans", "Noto Sans", sans-serif; color: #3c4043; }
.tabs { display: flex; align-items: center; height: 34px; background: #dee1e6; padding-left: 9px; }
.tab { flex: 0 1 239px; min-width: 0; height: 34px; display: flex; align-items: center; gap: 8px; padding: 0 8px 0 11px; font-size: 11px; position: relative; }
.tab span { flex: 1; overflow: hidden; white-space: nowrap; mask-image: linear-gradient(90deg, #000 88%, transparent); }
.tab:nth-child(-n+2)::after { content: ""; position: absolute; right: 0; top: 8px; height: 18px; border-right: 1px solid #85888d; }
.tab.active { background: #fff; border-radius: 8px 8px 0 0; }
.newtab { margin-left: 14px; }
.winctl { margin-left: auto; display: flex; gap: 30px; padding: 0 15px 4px 0; }
.toolbar { display: flex; align-items: center; height: 36px; padding: 0 8px 0 14px; gap: 16px; }
.omnibox { flex: 1; height: 28px; border-radius: 14px; background: #f1f3f4; display: flex; align-items: center; padding: 0 9px 0 10px; gap: 8px; margin-left: -2px; font-size: 13px; }
.insecure { color: #5f6368; padding-right: 8px; border-right: 1px solid #a5a8ad; line-height: 16px; }
.omnibox input { flex: 1; border: 0; background: none; font: inherit; color: #202124; padding: 0 2px; outline: 0; }
.ext { display: flex; align-items: center; gap: 16px; }
.profile { width: 22px; height: 22px; border-radius: 50%; background: #e83e7c; color: #fff; font-size: 12px; line-height: 22px; text-align: center; margin: 0 -9px 0 -3px; }
.update { display: flex; align-items: center; justify-content: space-between; width: 82px; height: 28px; padding: 0 10px 0 12px; border: 1px solid #c5221f; border-radius: 14px; background: #fceeee; color: #c5221f; font-size: 12px; }
.update svg { width: 4px; height: 16px; }
.bookmarks { display: flex; align-items: center; height: 32px; padding: 0 14px 5px 13px; gap: 17px; font-size: 11px; }
.bookmarks a { display: flex; align-items: center; gap: 9px; white-space: nowrap; }
.bookmarks .reading { margin-left: auto; padding-left: 11px; border-left: 1px solid #c8cacd; font-size: 12px; gap: 8px; }

/* page area and scroll bar */
.viewport { flex: 1; display: flex; }
.site { flex: 1; min-width: 0; }
.scrollbar { width: 17px; background: #f0f0f0; display: flex; flex-direction: column; align-items: center; }
.scrollbar i { display: block; }
.up, .down { border: 4px solid transparent; }
.up { border-bottom-color: #505050; margin: 3px 0 88px; }
.down { border-top-color: #505050; margin: auto 0 2px; }
.thumb { width: 13px; flex: 0 0 82.5%; background: #c1c1c1; }
.wrap { max-width: 1280px; margin: 0 auto; display: flex; align-items: center; }

/* site header */
.banner { background: linear-gradient(#fff 31px, #000 31px, #000 32px, #002f6c 32px); }
.banner .wrap { height: 73px; }
.logo svg { display: block; width: 180px; height: 73px; overflow: visible; }
.logo text { font-family: "DejaVu Sans", sans-serif; font-weight: 700; font-style: italic; fill: #006934; stroke: #006934; stroke-width: 2px; }
.logo-f { font-size: 72px; }
.logo-ins { font-size: 64px; }
.user { margin: 0 12px 8px auto; width: 46px; height: 46px; border-radius: 50%; background: #f6f8fa; border: 1px solid #dfe3e8; display: grid; place-items: center; }
.user svg { width: 18px; height: 18px; }
.mainnav { position: relative; background: #fff; box-shadow: 0 4px 16px rgba(0, 0, 0, .08); font-size: 15px; font-weight: 300; color: #4d5966; }
.mainnav .wrap { height: 58px; padding: 0 16px 3px 14px; gap: 34px; }
.mainnav a { display: flex; align-items: center; gap: 10px; }
.mainnav svg { width: 22px; height: 22px; color: #a3b1b8; }
.mainnav .on { color: #0a96f5; font-weight: 400; }
.mainnav .on svg { color: #0a96f5; }
.mainnav .admin { margin-left: auto; }

/* content */
.card { max-width: 1280px; margin: 0 auto 43px; background: #fff; border-radius: 0 0 4px 4px; padding: 46px 50px 87px; }
h1 { margin: 0; font-size: 22px; line-height: 30px; font-weight: 400; text-align: center; }
.intro { margin: 8px -10px 43px; font-size: 19px; line-height: 22px; }
.cols { display: flex; align-items: flex-start; gap: 30px; }

/* map */
.map { position: relative; flex: 1; height: 474px; outline: 1px solid #ddd; outline-offset: -1px; overflow: hidden; }
.base { display: block; width: 877px; min-width: 100%; height: 100%; }
.places span, .tips span { position: absolute; white-space: nowrap; }
.places span { transform: translateY(-50%); font: 10px/12px "Noto Sans", sans-serif; color: #333; text-shadow: 0 0 2px #fff, 0 0 2px #fff; }
.places .big { font-size: 13px; line-height: 16px; }
.places .two { transform: translate(-50%, -50%); text-align: center; }
.places .faded { color: #5c6390; text-shadow: none; }
.places .county { font-style: italic; color: #95649a; }
.places .basin { font: 10px/12px "Liberation Sans", sans-serif; color: #6d4f45; text-shadow: none; opacity: .8; }
.places .shield { font-size: 10px; line-height: 17px; padding: 0 6px; background: #edb9c8; border: 1px solid #c98ba0; border-radius: 2px; color: #5d2136; text-shadow: none; }
.tips span { height: 21px; padding: 0 3px; background: rgba(255, 255, 255, .95); border-radius: 2px; box-shadow: 0 1px 3px rgba(0, 0, 0, .45); font: 12px/21px "Open Sans", "Noto Sans", sans-serif; color: #222; }
.controls { position: absolute; inset: 9px 0 auto 11px; display: flex; align-items: flex-start; }
.zoom { display: flex; flex-direction: column; width: 26px; margin: 2px 12px 0 0; border-radius: 2px; background: #fff; box-shadow: 0 1px 4px rgba(0, 0, 0, .5); }
.zoom button { height: 26px; font: bold 18px/26px "Liberation Mono", monospace; color: #000; }
.zoom button + button { border-top: 1px solid #bbb; }
.info { display: flex; flex-direction: column; align-items: flex-start; gap: 1px; font-size: 17px; font-weight: 300; color: #222; }
.info div { display: flex; align-items: center; gap: 5px; height: 39px; padding: 0 5px 0 6px; background: #fff; border-radius: 2px; box-shadow: 0 1px 4px rgba(0, 0, 0, .5); }
.info svg { width: 16px; height: 16px; margin-bottom: 4px; }
.panel { margin-left: auto; width: 122px; background: #fff; border: solid #ddd; border-width: 1px 1px 0; border-radius: 4px; display: flex; flex-direction: column; }
.panel button { display: flex; align-items: center; gap: 3px; height: 46px; padding-left: 19px; font-size: 15px; color: #4c5b6d; border-bottom: 1px solid #ddd; }
.panel svg { width: 12px; height: 12px; }
.scale { position: absolute; left: 9px; bottom: 9px; padding: 3px; background: rgba(255, 255, 255, .85); }
.scale span { display: block; width: 64px; height: 17px; border: solid #000; border-width: 0 1px 2px; font: 10px/15px "Noto Sans", sans-serif; color: #666; text-align: center; }
.attrib { position: absolute; right: 10px; bottom: 10px; width: 25px; height: 25px; background: #fff; border-radius: 2px; font: 14px/25px "Noto Sans", sans-serif; color: #333; }

/* side lists */
.side { flex: 0 0 273px; display: flex; flex-direction: column; gap: 10px; font-size: 16px; }
.side h2 { margin: 0; height: 40px; padding: 0 13px; border-radius: 3px; background: #0060cf; color: #fff; font: 16px/39px "Liberation Sans", sans-serif; }
.side h2.gold { background: #d19e00; color: #2b2b2b; }
.side ul { margin: 0; padding: 0; list-style: none; border: solid #ddd; border-width: 0 1px; }
.side li { height: 49px; padding-left: 20px; line-height: 49px; border-bottom: 1px solid #ddd; }
.side li a { color: #2f7be6; font-weight: 300; }
.ranges { margin: 0; min-height: 70px; padding: 11px 20px 10px 10px; border: 1px solid #ddd; border-top: 0; font-size: 17px; line-height: 24px; color: #1273e6; }
```
